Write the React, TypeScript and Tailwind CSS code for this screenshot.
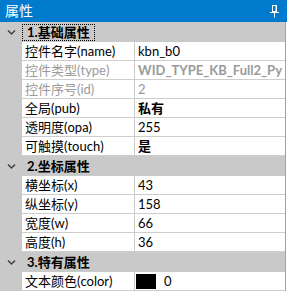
import React from 'react';

type Row = { name: string; value: string; disabled?: boolean; bold?: boolean; color?: boolean };
type Section = { title: string; focused?: boolean; rows: Row[] };

const SECTIONS: Section[] = [
    {
        title: '1.基础属性',
        focused: true,
        rows: [
            { name: '控件名字(name)', value: 'kbn_b0' },
            { name: '控件类型(type)', value: 'WID_TYPE_KB_Full2_Py', disabled: true, bold: true },
            { name: '控件序号(id)', value: '2', disabled: true },
            { name: '全局(pub)', value: '私有', bold: true },
            { name: '透明度(opa)', value: '255' },
            { name: '可触摸(touch)', value: '是', bold: true },
        ],
    },
    {
        title: '2.坐标属性',
        rows: [
            { name: '横坐标(x)', value: '43' },
            { name: '纵坐标(y)', value: '158' },
            { name: '宽度(w)', value: '66' },
            { name: '高度(h)', value: '36' },
        ],
    },
    {
        title: '3.特有属性',
        rows: [{ name: '文本颜色(color)', value: '0', color: true }],
    },
];

const Chevron = () => (
    <svg width="22" height="20" viewBox="0 0 22 20" className="shrink-0">
        <polyline points="8,8.5 11.5,12 15,8.5" fill="none" stroke="#404040" strokeWidth="1.5" />
    </svg>
);

const Pin = () => (
    <svg width="10" height="13" viewBox="0 0 10 13">
        <rect x="2.5" y="0.5" width="4" height="6" fill="none" stroke="#fff" strokeWidth="1" />
        <rect x="5.5" y="0.5" width="1.5" height="6" fill="#fff" />
        <line x1="0" y1="7.5" x2="9" y2="7.5" stroke="#fff" strokeWidth="1" />
        <line x1="4.5" y1="8" x2="4.5" y2="12.5" stroke="#fff" strokeWidth="1" />
    </svg>
);

export default function App() {
    return (
        <div
            className="w-[287px] h-[300px] bg-white overflow-hidden text-[13px] leading-none text-black"
            style={{ fontFamily: 'Lato, "Noto Sans CJK SC", sans-serif' }}
        >
            {/* Title bar */}
            <div className="h-[22px] bg-[#007acc] flex items-center justify-between pl-[5px] pr-[7px] text-white text-[14px]">
                <span>属性</span>
                <Pin />
            </div>

            <div className="w-[286px] border-r border-[#a0a0a0]">
                {SECTIONS.map(section => (
                    <div key={section.title}>
                        {/* Group header */}
                        <div className="h-[20px] bg-[#c9c9c9] flex items-start">
                            <Chevron />
                            <div
                                className={`h-[17px] mt-[2px] px-[4px] flex items-center font-bold border border-dotted ${
                                    section.focused ? 'border-black' : 'border-transparent'
                                }`}
                            >
                                {section.title}
                            </div>
                        </div>

                        {/* Rows */}
                        {section.rows.map(row => (
                            <div key={row.name} className="h-[19px] flex">
                                <div className="w-[22px] shrink-0 bg-[#c9c9c9]" />
                                <div
                                    className={`w-[113px] shrink-0 pl-[3px] flex items-center border-b border-r border-[#cdcdcd] whitespace-nowrap ${
                                        row.disabled ? 'text-[#9a9a9a]' : ''
                                    }`}
                                >
                                    {row.name}
                                </div>
                                <div
                                    className={`flex-1 min-w-0 pl-[3px] flex items-center border-b border-[#cdcdcd] whitespace-nowrap overflow-hidden ${
                                        row.disabled ? 'text-[#9a9a9a]' : ''
                                    } ${row.bold ? 'font-bold' : ''}`}
                                >
                                    {row.color && <span className="w-[20px] h-[15px] bg-black mr-[8px] -ml-[2px]" />}
                                    {row.value}
                                </div>
                            </div>
                        ))}
                    </div>
                ))}
            </div>
        </div>
    );
}
